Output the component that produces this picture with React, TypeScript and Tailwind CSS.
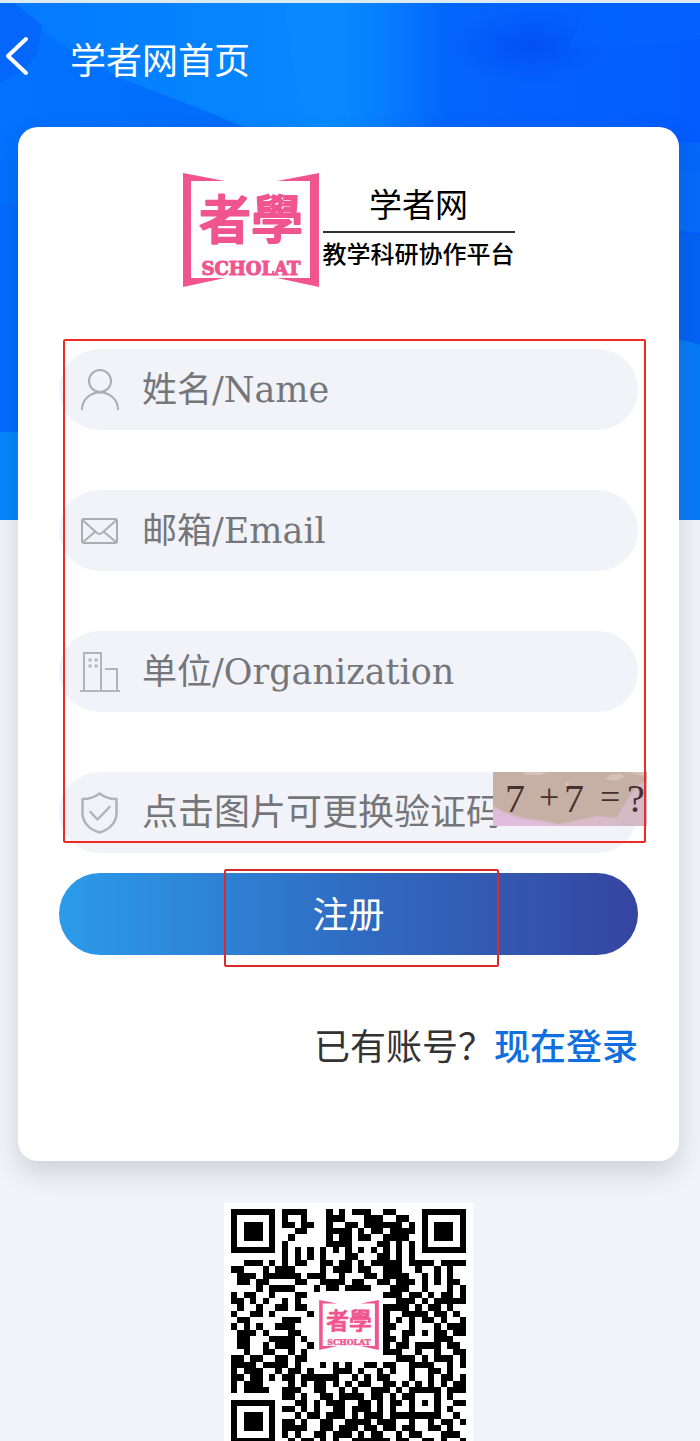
import type { ReactNode } from "react";
import clsx from "clsx";

const QR_ROWS = [
  "#######.####...#.#.###..##....#######",
  "#.....#.#..#...###...###..##..#.....#",
  "#.###.#.##.##..#..##.######.#.#.###.#",
  "#.###.#...##...####.#.##.####.#.###.#",
  "#.###.#..#.....#.##.##..####..#.###.#",
  "#.....#.#......####....##.#.#.#.....#",
  "#######.#.#.#.#.#.#.#.#.#.#.#.#######",
  "........#.#.#.#...##...##.#.#........",
  "..###.#.#.##..##.##.#.#####.####.####",
  "##...#.###....#.###.##..###..#..#.#..",
  ".###.######.###..#...##.####..#.#.#..",
  ".##.##....##..####.##..##.###.#.#.##.",
  "....#.####...#.##.####...###..#...#.#",
  "#.##..#...##............###.##.#.##.#",
  "##.#.#..#.#...............###.#.#####",
  ".#..#..##.##............####.#.##.#..",
  "#..##.#.....#...........#..####.##.#.",
  ".##.....###.............#.#.#.##.#..#",
  "#.#.#..###..............##..#...#.###",
  ".###.#...##.............#..##.#.##.##",
  ".##...####.#............##.#....###..",
  ".##..#.###..#...........#.##.####.##.",
  "..#..##..#.#............###..#..#..##",
  "##.##..##.##..............###.#.###.#",
  "####.####.#...#.#.#..##.##..####..#.#",
  "#.###..#.##.#...###.#..#.#..#..##.#..",
  "##.##.#.##.######..#.#.##...#..#.##.#",
  "#.###....#.#.##.#.#.##..##.#.#.#.#.##",
  "#.####..###..##..#.#..###.#.#####.###",
  "........##.#..##.####.##.#.##...#.#..",
  "#######...##.#.###..##.#.##.#.#.#..##",
  "#.....#.##.#.#..##.###.#.#..#...#.#..",
  "#.###.#...#.##.###.#.###.########..#.",
  "#.###.#.##.#..##..####.###..#..#.##.#",
  "#.###.#.####..##.###.##.##.##..##.#..",
  "#.....#.#.#..##.###.#.##..#.##...###.",
  "#######..#.##.#.#..######.##..##.#..#",
];

const QR_PATH = QR_ROWS.flatMap((row, y) =>
  [...row].map((cell, x) => (cell === "#" ? `M${x} ${y}h1v1h-1z` : ""))
).join("");

function LogoMark({ className }: { className?: string }) {
  return (
    <svg viewBox="0 0 136 114" className={className} role="img" aria-label="SCHOLAT">
      <g fill="#f0558f">
        <path d="M0 0 L42 8 L8 8 L8 105 L42 105 L0 114 Z" />
        <path d="M136 0 L94 8 L127 8 L127 105 L94 105 L136 114 Z" />
        <text
          x="68"
          y="66"
          textAnchor="middle"
          fontSize="52"
          fontWeight="500"
          stroke="#f0558f"
          strokeWidth="2"
          strokeLinejoin="round"
          fontFamily="'Noto Sans CJK TC', sans-serif"
        >
          者學
        </text>
        <text
          x="68"
          y="102"
          textAnchor="middle"
          fontSize="18"
          fontWeight="700"
          stroke="#f0558f"
          strokeWidth="1"
          fontFamily="'DejaVu Serif', serif"
        >
          SCHOLAT
        </text>
      </g>
    </svg>
  );
}

function UserIcon() {
  return (
    <svg viewBox="0 0 40 42" className="h-[42px] w-10 shrink-0" fill="none" stroke="#abadb0" strokeWidth="2">
      <circle cx="20" cy="12" r="11" />
      <path d="M2 41C2 31 9.500 23.500 20 23.500S38 31 38 41" />
    </svg>
  );
}

function MailIcon() {
  return (
    <svg viewBox="0 0 40 42" className="h-[42px] w-10 shrink-0" fill="none" stroke="#abadb0" strokeWidth="2">
      <rect x="2" y="9" width="35" height="24" rx="2" />
      <path d="M3 10.500l14 12.500q2.500 1.800 5 0L36 10.500M3 32l12.500-10.500M36 32L23.500 21.500" />
    </svg>
  );
}

function BuildingIcon() {
  return (
    <svg viewBox="0 0 40 42" className="h-[42px] w-10 shrink-0" fill="none" stroke="#b3b3ba" strokeWidth="2">
      <path d="M4 39V2H21V39M25 18H37V39M0 40H40" />
      <path d="M8.500 9h3M14.500 9h3M8.500 15h3M14.500 15h3" strokeWidth="3" />
    </svg>
  );
}

function ShieldIcon() {
  return (
    <svg
      viewBox="0 0 40 42"
      className="h-[42px] w-10 shrink-0"
      fill="none"
      stroke="#b0b3b8"
      strokeWidth="2.500"
      strokeLinejoin="round"
    >
      <path d="M19.500 1.500C15 5 9 7 2.500 7V21C2.500 30 9 37.500 19.500 40.500C30 37.500 36.500 30 36.500 21V7C30 7 24 5 19.500 1.500Z" />
      <path d="M10.500 20l7 7.500L29.500 15" strokeLinecap="round" />
    </svg>
  );
}

function Captcha() {
  return (
    <button type="button" aria-label="更换验证码" className="absolute top-0 -right-[9px] h-[54px] w-[154px]">
      <svg viewBox="0 0 154 54" className="h-full w-full">
        <rect width="154" height="54" fill="#c6b0a5" />
        <path d="M134 28L144 14L154 8V54H124V45Z" fill="#d4b9c6" />
        <path d="M0 34L12 40L30 46L52 49L66 52L90 47L104 44L124 46V54H0Z" fill="#d9bac8" />
        <path d="M0 37L12 42L30 48L52 51L64 54H0Z" fill="#e0bcdc" />
        <path d="M28 0h26l-6 3H34zM112 7l6-4 10-1 4 3-10 4zM72 10l4 1-2 5zM136 0h17v4l-9-1z" fill="#d6c2ba" />
        <g fill="#44302f" fontSize="40" fontFamily="'Liberation Serif', serif">
          <text x="12" y="40">7</text>
          <text x="46" y="37" fontSize="36">+</text>
          <text x="71" y="40">7</text>
          <text x="107" y="37" fontSize="36">=</text>
          <text x="134" y="40" fontSize="40">?</text>
        </g>
      </svg>
    </button>
  );
}

type FieldProps = {
  id: string;
  icon: ReactNode;
  placeholder: string;
  large?: boolean;
  children?: ReactNode;
};

function Field({ id, icon, placeholder, large, children }: FieldProps) {
  return (
    <div className="relative flex h-[81px] items-center gap-[22px] rounded-full bg-[#f1f3f8] pl-[21px]">
      <label htmlFor={id} aria-label={placeholder}>
        {icon}
      </label>
      <input
        id={id}
        placeholder={placeholder}
        className={clsx(
          "h-full min-w-0 flex-1 bg-transparent font-['DejaVu_Serif','Noto_Sans_CJK_SC',serif] text-[#74767a] outline-none placeholder:text-[#74767a]",
          large ? "text-[36px]" : "text-[35px]"
        )}
      />
      {children}
    </div>
  );
}

function Hero() {
  return (
    <svg
      viewBox="0 0 700 517"
      preserveAspectRatio="none"
      className="col-start-1 row-start-1 mt-[3px] h-[517px] w-full"
      aria-hidden="true"
    >
      <defs>
        <linearGradient id="sky" x1="0" x2="1" y1="0" y2="0">
          <stop offset="0" stopColor="#0478ff" />
          <stop offset="0.2" stopColor="#0580ff" />
          <stop offset="0.48" stopColor="#0889ff" />
          <stop offset="0.54" stopColor="#0780ff" />
          <stop offset="0.64" stopColor="#0465fc" />
          <stop offset="1" stopColor="#025cff" />
        </linearGradient>
        <linearGradient id="wave" x1="0" x2="1" y1="0" y2="0">
          <stop offset="0" stopColor="#0272ff" />
          <stop offset="1" stopColor="#026cfa" />
        </linearGradient>
        <radialGradient id="dusk">
          <stop offset="0" stopColor="#0250f2" />
          <stop offset="1" stopColor="#0254f5" stopOpacity="0" />
        </radialGradient>
      </defs>
      <rect width="700" height="517" fill="url(#sky)" />
      <path d="M0 0L42 28L70 46L120 75L180 98L250 126V517H0Z" fill="url(#wave)" />
      <path d="M0 0H14L42 22L38 48L24 68L0 80Z" fill="#0466fa" />
      <path d="M285 0H350V126H305Q290 60 285 0Z" fill="#0a8dff" opacity="0.4" />
      <ellipse cx="530" cy="44" rx="80" ry="40" fill="url(#dusk)" />
      <path d="M590 0H700V36L650 44L568 44Z" fill="#0364ff" opacity="0.6" />
      <path d="M640 140H700V170H640Z" fill="#0468fb" />
      <path d="M640 170H700V230L640 224Z" fill="#056cfa" />
      <path d="M640 226L700 232V345H640Z" fill="#0363f5" />
      <path d="M640 334Q680 334 700 342V517H640Z" fill="#077cf8" />
      <path d="M0 200H30V429H0Z" fill="#036bff" />
      <path d="M0 429H30V517H0Z" fill="#0685fc" />
    </svg>
  );
}

export default function App() {
  return (
    <div className="grid min-h-screen grid-cols-1 grid-rows-1 items-start overflow-hidden bg-[#f2f4f9] font-['Noto_Sans_CJK_SC',sans-serif]">
      <Hero />
      <div className="z-10 col-start-1 row-start-1">
        <header className="flex h-[112px] items-center gap-10 border-t-[3px] border-[#dcebf0] pl-1 text-white">
          <a href="#back" aria-label="返回">
            <svg viewBox="0 0 26 42" className="mb-1 h-[42px] w-[26px]" fill="none" stroke="currentColor" strokeWidth="4">
              <path d="M22 4L4 21L22 38" strokeLinecap="round" strokeLinejoin="round" />
            </svg>
          </a>
          <h1 className="text-[36px] leading-none">学者网首页</h1>
        </header>

        <main className="mt-[15px] mr-[21px] ml-[18px]">
          <section className="rounded-[20px] bg-white px-[41px] pt-[46px] pb-[92px] shadow-[0_12px_28px_rgba(40,50,70,0.18)]">
            <div className="flex justify-center gap-1">
              <LogoMark className="h-[114px] w-[136px]" />
              <div className="flex flex-col items-center pt-3 text-black">
                <p className="text-[33px] leading-9">学者网</p>
                <div className="mt-[10px] h-[2px] w-full bg-[#333]" />
                <p className="mt-1 text-2xl leading-8 font-medium">教学科研协作平台</p>
              </div>
            </div>

            <form className="mt-[62px]" onSubmit={(e) => e.preventDefault()}>
              <div className="relative flex flex-col gap-[60px]">
                <Field id="name" icon={<UserIcon />} placeholder="姓名/Name" />
                <Field id="email" icon={<MailIcon />} placeholder="邮箱/Email" />
                <Field id="organization" icon={<BuildingIcon />} placeholder="单位/Organization" />
                <Field id="code" icon={<ShieldIcon />} placeholder="点击图片可更换验证码" large>
                  <Captcha />
                </Field>
                <div className="pointer-events-none absolute -top-[10px] -right-2 bottom-[10px] left-1 rounded-[2px] border-2 border-[#ed2a24]" />
              </div>

              <div className="relative mt-5">
                <button
                  type="submit"
                  className="h-[82px] w-full rounded-full bg-linear-to-r from-[#2b9bea] via-[#2f6dc3] to-[#3445a0] pb-1 text-[36px] text-white"
                >
                  注册
                </button>
                <div className="pointer-events-none absolute -top-1 left-1/2 h-[98px] w-[275px] -translate-x-[125px] rounded-[2px] border-2 border-[#d92a2c]" />
              </div>
            </form>

            <p className="mt-16 text-right text-[36px] leading-[50px] text-[#333]">
              已有账号？
              <a href="#login" className="font-medium text-[#0f6fe0]">
                现在登录
              </a>
            </p>
          </section>

          <div className="mx-auto mt-[42px] grid w-[249px] place-items-center bg-white pt-[6px]">
            <svg
              viewBox="0 0 37 36.5"
              preserveAspectRatio="none"
              shapeRendering="crispEdges"
              className="col-start-1 row-start-1 h-[232px] w-[235px]"
              role="img"
              aria-label="QR"
            >
              <path d={QR_PATH} fill="#000" />
            </svg>
            <div className="col-start-1 row-start-1 grid h-[68px] w-[68px] place-items-center rounded-xl bg-white">
              <LogoMark className="h-[50px] w-[60px]" />
            </div>
          </div>
        </main>
      </div>
    </div>
  );
}
